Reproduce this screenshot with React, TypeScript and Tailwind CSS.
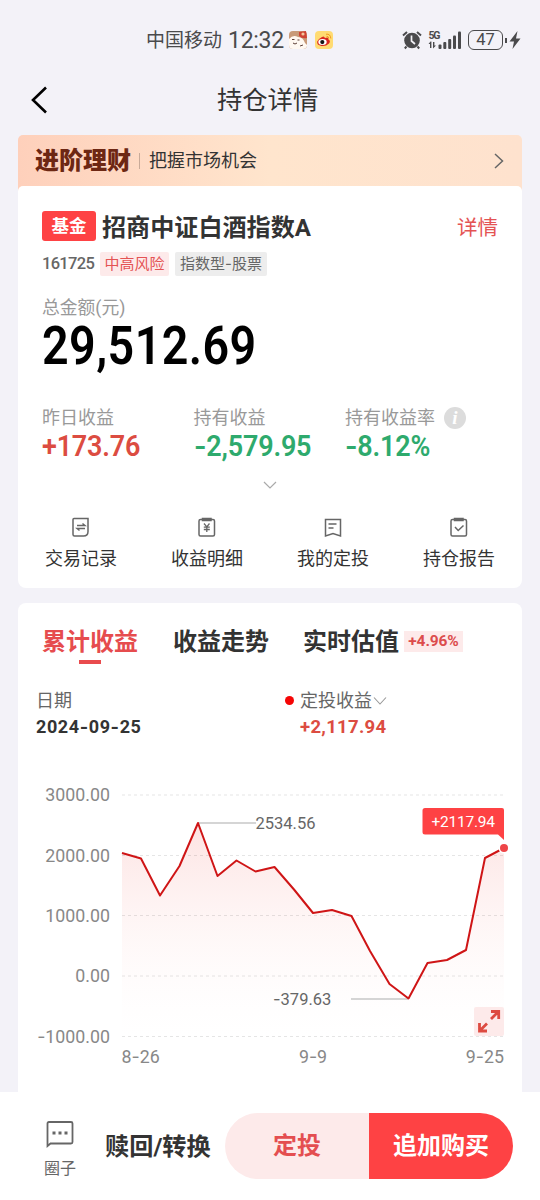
import type { ReactNode } from "react";

const points = [
  [122, 853], [141, 858.5], [160, 895.5], [179.5, 866], [198, 823],
  [217.5, 876], [236.5, 860.5], [255.5, 871.5], [274.5, 867], [294, 889.5],
  [313, 913], [332, 910], [351.5, 916], [370, 951], [389.5, 984],
  [408.5, 998.5], [427.5, 963], [447, 960], [466, 950], [485, 858], [504, 848],
];

const axis = [
  { y: 795, label: "3000.00" },
  { y: 855.5, label: "2000.00" },
  { y: 915.5, label: "1000.00" },
  { y: 976, label: "0.00" },
  { y: 1036.5, label: "-1000.00" },
];

function StatusBar() {
  return (
    <div className="flex h-[70px] items-center pt-[10px] pl-[146px] text-[#4a4a4c]">
      <span className="w-[82px] pt-[2px] text-[19px] leading-6">中国移动</span>
      <span className="w-[60px] pt-[2px] text-[23px] leading-6 tracking-[-0.3px]">12:32</span>
      <svg width="20" height="20" viewBox="0 0 20 20">
        <rect x="1" y="1" width="18" height="18" rx="4" fill="#c89a78" />
        <path d="M1 9 Q5 4 10 7 Q15 7 17 13 L19 15 V16 Q18 19 15 19 H5 Q1 19 1 15Z" fill="#fff8f1" />
        <path d="M11 2 L18 1 L19 8 Q14 9 11 6Z" fill="#cf4333" />
        <circle cx="15" cy="4" r="1.6" fill="#f4c59b" />
        <path d="M4 9.500h2.500M9.500 10h2M5 13q2 2 4 0M12 16l3-1" stroke="#5d4038" strokeWidth="1" fill="none" />
      </svg>
      <svg className="ml-[6px]" width="20" height="20" viewBox="0 0 20 20">
        <rect x="1" y="1" width="18" height="18" rx="4" fill="#ffdb72" />
        <path d="M8 7 Q10 5.500 11 8 Q15 6.500 14.500 9.500 Q17 11 15 13.500 Q12 16.500 7.500 16 Q2.500 15 3.200 11.500 Q4.500 8.500 8 7Z" fill="#d9281f" />
        <ellipse cx="8.500" cy="12" rx="4.200" ry="3" fill="#fff" />
        <circle cx="8.300" cy="12.100" r="2.100" fill="#151515" />
        <path d="M12 4.200 Q16.500 3.600 16.800 8.500M12.500 6.300 Q14.500 6.200 14.700 8" stroke="#f29a1f" strokeWidth="1" fill="none" />
      </svg>
      <svg className="ml-[67px]" width="22" height="20" viewBox="0 0 22 20">
        <circle cx="11" cy="10.500" r="7.800" fill="#4a4a4c" />
        <path d="M2 5.500 L6 2M20 5.500 L16 2M5.500 16.500 L3.800 18.500M16.500 16.500 L18.200 18.500" stroke="#4a4a4c" strokeWidth="2" />
        <path d="M10.500 5.500 V11 L14 14" stroke="#f3f2f7" strokeWidth="1.700" fill="none" />
      </svg>
      <svg className="ml-[5px]" width="36" height="22" viewBox="0 0 36 22" fill="#4a4a4c">
        <text x="0.500" y="9.500" fontSize="10.500" fontWeight="700" textLength="12">5G</text>
        <path d="M2.500 12.500 L0.500 15 H2 V19 H3.400 V12.500ZM5 13 V19.500 L8 16.500 H6.400 V13Z" />
        <rect x="10.500" y="15.500" width="3" height="4.500" rx="1" />
        <rect x="15.300" y="13" width="3" height="7" rx="1" />
        <rect x="20.200" y="10" width="3" height="10" rx="1" />
        <rect x="25" y="6.500" width="3" height="13.500" rx="1" />
        <rect x="30" y="2.500" width="3" height="17.500" rx="1" />
      </svg>
      <div className="ml-[4px] flex h-5 w-[35px] items-center justify-center rounded-[6px] border-[1.5px] border-[#4a4a4c] text-[16.5px] leading-5">
        47
      </div>
      <div className="ml-[2px] h-[5px] w-[2px] bg-[#4a4a4c]" />
      <svg className="ml-[2px]" width="12" height="20" viewBox="0 0 12 20">
        <path d="M8.500 1 L0.500 11.500 H5 L3.500 19 L11.500 8.500 H7Z" fill="#4a4a4c" />
      </svg>
    </div>
  );
}

// Numbers use a long dash, so the hyphen comes from a wider family
function Num({ children }: { children: string }) {
  return (
    <>
      {children.split(/(-)/).map((part, i) =>
        part === "-" ? (
          <span key={i} className="font-['Inter']">-</span>
        ) : (
          part
        )
      )}
    </>
  );
}

function Stat({ label, value, color, info }: { label: string; value: string; color: string; info?: boolean }) {
  return (
    <div className="w-[151.5px] whitespace-nowrap">
      <div className="flex h-6 items-center text-[18px] leading-6 text-[#999]">
        {label}
        {info && (
          <span className="ml-[9px] flex h-[22px] w-[22px] items-center justify-center rounded-full bg-[#dcdcdc] font-['Liberation_Serif'] text-[19px] font-bold italic leading-5 text-white">
            i
          </span>
        )}
      </div>
      <div className={`origin-left scale-x-[0.93] text-[29px] font-semibold leading-8 tracking-[-0.2px] ${color}`}>
        <Num>{value}</Num>
      </div>
    </div>
  );
}

function Action({ label, children }: { label: string; children: ReactNode }) {
  return (
    <div className="flex flex-col items-center">
      <svg width="20" height="22" viewBox="0 0 20 22" fill="none" stroke="#666" strokeWidth="1.500">
        {children}
      </svg>
      <span className="mt-[9px] text-[18px] leading-6 text-[#333]">{label}</span>
    </div>
  );
}

function HoldingCard() {
  return (
    <div className="h-[402px] rounded-t-[5px] rounded-b-lg bg-white pt-[25px]">
      <div className="flex h-[30px] items-center px-6">
        <span className="flex h-[30px] w-[54px] items-center justify-center rounded-[3px] bg-[#fe4244] text-[17.5px] font-bold leading-6 text-white">
          基金
        </span>
        <span className="ml-[6px] pt-[3px] text-[24.1px] font-bold leading-8 text-[#333]">招商中证白酒指数A</span>
        <span className="ml-auto pt-[3px] text-[20.5px] leading-6 text-[#e45353]">详情</span>
      </div>
      <div className="mt-[11px] flex h-6 items-center pl-6 text-[15px] leading-6">
        <span className="w-[58px] text-[16.5px] font-medium tracking-[-0.7px] text-[#666]">161725</span>
        <span className="flex h-6 w-[69px] items-center justify-center rounded-[2px] bg-[#fdeaea] text-[#e45353]">
          中高风险
        </span>
        <span className="ml-[6px] flex h-6 w-[92px] items-center justify-center rounded-[2px] bg-[#ededed] text-[#666]">
          <Num>指数型-股票</Num>
        </span>
      </div>
      <div className="mt-[20px] pl-6 text-[17.8px] leading-6 text-[#999]">总金额(元)</div>
      <div className="ml-6 w-60 origin-left scale-x-[0.88] text-[53px] font-semibold leading-[52px] tracking-[0.5px] text-black">
        29,512.69
      </div>
      <div className="mt-[34px] flex pl-6">
        <Stat label="昨日收益" value="+173.76" color="text-[#dc4c41]" />
        <Stat label="持有收益" value="-2,579.95" color="text-[#2eaa6d]" />
        <Stat label="持有收益率" value="-8.12%" color="text-[#2eaa6d]" info />
      </div>
      <div className="mt-[18px] flex justify-center">
        <svg width="14" height="10" viewBox="0 0 14 10">
          <path d="M1 2 L7 8 L13 2" fill="none" stroke="#aaa" strokeWidth="1.200" />
        </svg>
      </div>
      <div className="mt-[26px] grid grid-cols-4">
        <Action label="交易记录">
          <path d="M3 2.500 H17 V15.500 Q17 20 12.500 20 H3.500 Q2 20 2 18.500 V3.500 Q2 2.500 3 2.500Z" />
          <path d="M6 9.500 H14 L11.500 7.500M14 12.500 H6 L8.500 14.500" strokeWidth="1.400" />
        </Action>
        <Action label="收益明细">
          <rect x="2" y="3.500" width="15.500" height="16.500" rx="1.500" />
          <path d="M5.500 2.500 H14 V4.500 H5.500Z" />
          <path d="M7 7.500 L9.800 10.800 L12.500 7.500M9.800 10.800 V16M6.800 11.200 H12.800M6.800 13.500 H12.800" strokeWidth="1.300" />
        </Action>
        <Action label="我的定投">
          <path d="M2.500 3.500 H17.500 V20 L10 17.500 L2.500 20Z" />
          <path d="M5.500 8 H13.500M5.500 12 H10.500" />
        </Action>
        <Action label="持仓报告">
          <rect x="2" y="3.500" width="15.500" height="16.500" rx="1.500" />
          <path d="M5.500 2.500 H14 V4.500 H5.500Z" />
          <path d="M6 11 L9.200 14.500 L14.500 9.500" />
        </Action>
      </div>
    </div>
  );
}

function Chart() {
  const line = points.map((p) => p.join(",")).join(" ");
  return (
    <svg className="block" width="504" height="300" viewBox="18 780 504 300">
      <defs>
        <linearGradient id="area" x1="0" y1="823" x2="0" y2="1036" gradientUnits="userSpaceOnUse">
          <stop offset="0" stopColor="#fde3e2" />
          <stop offset="1" stopColor="#fff" stopOpacity="0.200" />
        </linearGradient>
      </defs>
      <polygon points={`122,1036 ${line} 504,1036`} fill="url(#area)" />
      {axis.map(({ y, label }) => (
        <g key={label}>
          <line x1="122" x2="504" y1={y} y2={y} stroke="#000" strokeOpacity="0.100" strokeDasharray="3 3" />
          <text x="110" y={y + 6.300} textAnchor="end" fontSize="17.800" fill="#888">
            {label.startsWith("-") && <tspan fontFamily="Inter">-</tspan>}
            {label.replace("-", "")}
          </text>
        </g>
      ))}
      <g fontSize="17.800" fill="#888">
        <text x="121.500" y="1063">8<tspan fontFamily="Inter">-</tspan>26</text>
        <text x="313" y="1063" textAnchor="middle">9<tspan fontFamily="Inter">-</tspan>9</text>
        <text x="504" y="1063" textAnchor="end">9<tspan fontFamily="Inter">-</tspan>25</text>
      </g>
      <path d="M198 823 H256M351 999 H408" stroke="#c8c8c8" strokeWidth="1.300" />
      <g fontSize="16.500" fill="#666">
        <text x="255.500" y="829">2534.56</text>
        <text x="273" y="1005"><tspan fontFamily="Inter">-</tspan>379.63</text>
      </g>
      <polyline points={line} fill="none" stroke="#cf1516" strokeWidth="2" strokeLinejoin="round" />
      <circle cx="504" cy="848" r="5.500" fill="#fff" />
      <circle cx="504" cy="848" r="4" fill="#ee4548" />
      <path d="M425 808 H502 Q504 808 504 810 V840 L498 834.500 H425 Q422.500 834.500 422.500 832 V810.500 Q422.500 808 425 808Z" fill="#fe4244" />
      <text x="431.500" y="827" fontSize="15.500" fill="#fff" textLength="63.500">+2117.94</text>
      <rect x="474" y="1007" width="30" height="29" rx="2" fill="#fdeaea" />
      <g fill="none" stroke="#dd4b41" strokeWidth="2.800">
        <path d="M491 1011.500 H498.700 V1019M498 1012 L491 1019M479.500 1023 V1031 H487M480 1030.500 L487 1023.500" />
      </g>
    </svg>
  );
}

function EarningsCard() {
  return (
    <div className="mt-[15px] h-[489px] rounded-t-lg bg-white pt-[23px]">
      <div className="flex h-8 items-center pl-6 text-[24px] font-bold leading-8 text-[#333]">
        <span className="text-[#e64c4e]">累计收益</span>
        <span className="ml-[35px]">收益走势</span>
        <span className="ml-[34px]">实时估值</span>
        <span className="mb-[2px] ml-[5px] flex h-[21px] w-[59px] items-center justify-center bg-[#fdeaea] text-[15.5px] leading-5 tracking-[-0.1px] text-[#dc4c4c]">
          +4.96%
        </span>
      </div>
      <div className="mt-[2px] ml-[61px] h-[4px] w-[22px] bg-[#e94b4d]" />
      <div className="mt-[25px] flex h-[91px] pl-[18px]">
        <div className="w-[249px]">
          <div className="text-[18px] leading-6 text-[#666]">日期</div>
          <div className="mt-[2px] text-[18px] font-bold leading-6 tracking-[0.6px] text-[#333]">
            <Num>2024-09-25</Num>
          </div>
        </div>
        <div className="mt-[7px] h-[9px] w-[9px] rounded-full bg-[#f50505]" />
        <div className="ml-[6px]">
          <div className="flex items-center text-[18px] leading-6 text-[#666]">
            定投收益
            <svg className="ml-px" width="14" height="10" viewBox="0 0 14 10">
              <path d="M1 1.500 L7 8 L13 1.500" fill="none" stroke="#999" strokeWidth="1.100" />
            </svg>
          </div>
          <div className="mt-[2px] text-[18.5px] font-bold leading-6 tracking-[0.3px] text-[#dc4c41]">+2,117.94</div>
        </div>
      </div>
      <Chart />
    </div>
  );
}

function BottomBar() {
  return (
    <div className="flex h-[108px] items-center bg-white pl-[40px]">
      <div className="flex w-10 flex-col items-center pt-[7px]">
        <svg width="28" height="28" viewBox="0 0 28 28" fill="none" stroke="#666" strokeWidth="1.800">
          <path d="M1.500 26 V3.500 Q1.500 2 3 2 H25 Q26.500 2 26.500 3.500 V22 Q26.500 23.500 25 23.500 H4.500Z" />
          <path d="M6.500 13 H9.500M12.500 13 H15.500M18.500 13 H21.500" strokeWidth="2.800" />
        </svg>
        <span className="mt-[11px] text-[16px] leading-5 text-[#666]">圈子</span>
      </div>
      <span className="ml-[25px] w-[120px] pt-[2px] text-[24.2px] font-bold leading-8 text-[#333]">赎回/转换</span>
      <div className="flex h-[66px] w-[288px] overflow-hidden rounded-full text-[24px] font-bold leading-8">
        <button className="w-36 bg-[#fdeaea] text-[#e44e50]">定投</button>
        <button className="w-36 bg-[#fe4244] text-white">追加购买</button>
      </div>
    </div>
  );
}

export default function App() {
  return (
    <div className="h-[1200px] w-[540px] overflow-hidden bg-[#f3f2f8] font-['Roboto','Noto_Sans_CJK_SC',sans-serif]">
      <StatusBar />
      {/* Header */}
      <div className="flex h-[65px] items-center pb-[5px]">
        <svg className="ml-[29px]" width="20" height="30" viewBox="0 0 20 30">
          <path d="M17 2.500 L4 15 L17 27.500" fill="none" stroke="#000" strokeWidth="2.600" />
        </svg>
        <h1 className="ml-[168px] pt-[2px] text-[25.3px] leading-8 text-[#333]">持仓详情</h1>
      </div>
      <div className="px-[18px]">
        {/* Promo banner */}
        <div className="-mb-2 flex h-[59px] items-center rounded-t-[5px] bg-gradient-to-r from-[#fed0bb] via-[#ffe5cd] via-50% to-[#fee2ce] pb-2 pl-[17px]">
          <span className="text-[24px] font-black leading-8 text-[#6d2713]">进阶理财</span>
          <span className="ml-[8px] h-4 w-px bg-[#c9aa98]" />
          <span className="ml-[9px] text-[18px] leading-6 text-[#333]">把握市场机会</span>
          <svg className="mr-[16px] ml-auto" width="14" height="18" viewBox="0 0 14 18">
            <path d="M3 2 L10.500 9 L3 16" fill="none" stroke="#666" strokeWidth="1.500" />
          </svg>
        </div>
        <HoldingCard />
        <EarningsCard />
      </div>
      <BottomBar />
    </div>
  );
}
